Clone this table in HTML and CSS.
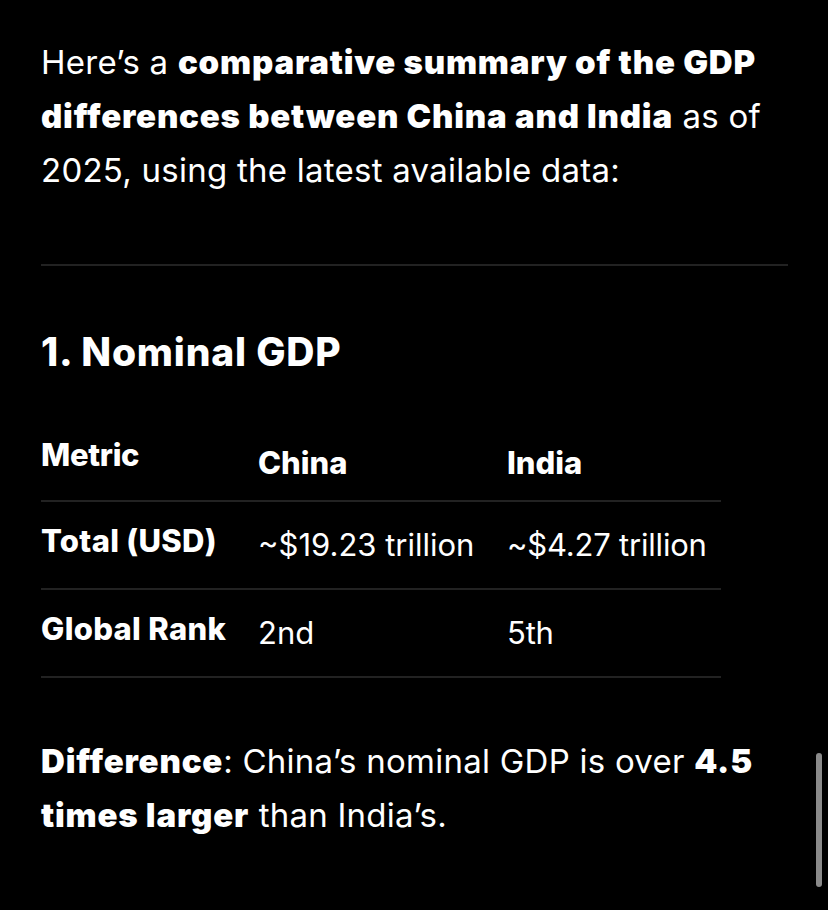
FILE: index.html
```html
<!DOCTYPE html>
<html lang="en">
<head>
<meta charset="utf-8">
<title>GDP comparison</title>
<link rel="stylesheet" href="styles.css">
</head>
<body>
<main class="content">
  <p class="intro">Here’s a <strong>comparative summary of the GDP differences between China and India</strong> as of 2025, using the latest available data:</p>
  <hr class="rule">
  <h3 class="section-title">1. Nominal GDP</h3>
  <table class="data">
    <thead>
      <tr>
        <th class="c1 head-first">Metric</th>
        <th class="c2">China</th>
        <th class="c3">India</th>
      </tr>
    </thead>
    <tbody>
      <tr>
        <th class="c1 row-label">Total (USD)</th>
        <td class="c2">~$19.23 trillion</td>
        <td class="c3">~$4.27 trillion</td>
      </tr>
      <tr>
        <th class="c1 row-label">Global Rank</th>
        <td class="c2">2nd</td>
        <td class="c3">5th</td>
      </tr>
    </tbody>
  </table>
  <p class="note"><strong>Difference</strong>: China’s nominal GDP is over <strong>4.5 times larger</strong> than India’s.</p>
</main>
<div class="scrollbar"></div>
</body>
</html>
```
FILE: styles.css
```css
html, body {
  margin: 0;
  background: #000;
}
body {
  color: #fff;
  font-family: Inter, "Noto Sans", sans-serif;
  width: 828px;
  height: 910px;
  overflow: hidden;
  position: relative;
}
.content {
  padding: 35px 40px 0 41px;
}
.intro, .note {
  margin: 0;
  font-size: 33px;
  line-height: 54px;
  font-weight: 400;
  letter-spacing: 0.25px;
}
.intro strong, .note strong {
  font-weight: 900;
  letter-spacing: 0.8px;
}
.rule {
  border: 0;
  height: 2px;
  background: #222;
  margin: 67px 0 0 0;
}
.section-title {
  margin: 64px 0 0 0;
  font-size: 39px;
  line-height: 44px;
  font-weight: 800;
  letter-spacing: 0.8px;
}
.data {
  border-collapse: separate;
  border-spacing: 0;
  margin-top: 52px;
  width: 680px;
  table-layout: fixed;
}
.data th, .data td {
  text-align: left;
  font-size: 31px;
  line-height: 38px;
  padding: 0;
  vertical-align: top;
  white-space: nowrap;
}
.data th {
  font-weight: 800;
}
.data td {
  font-weight: 400;
}
.data .row-label {
  letter-spacing: 0.3px;
}
.data td.c3 {
  letter-spacing: -0.2px;
}
.c1 { width: 217px; }
.c2 { width: 249px; }
.c3 { width: 214px; }
.data thead th {
  padding: 18px 0 18px;
  border-bottom: 2px solid #222;
}
.data thead .head-first {
  padding-top: 10px;
  padding-bottom: 26px;
  letter-spacing: -0.3px;
}
.data tbody td {
  padding: 24px 0 24px;
  border-bottom: 2px solid #222;
}
.data tbody .row-label {
  padding: 20px 0 28px;
  border-bottom: 2px solid #222;
}
.note {
  margin-top: 56px;
}
.scrollbar {
  position: absolute;
  left: 816px;
  top: 753px;
  width: 6px;
  height: 134px;
  border-radius: 3px;
  background: #8a8a8a;
}
```
